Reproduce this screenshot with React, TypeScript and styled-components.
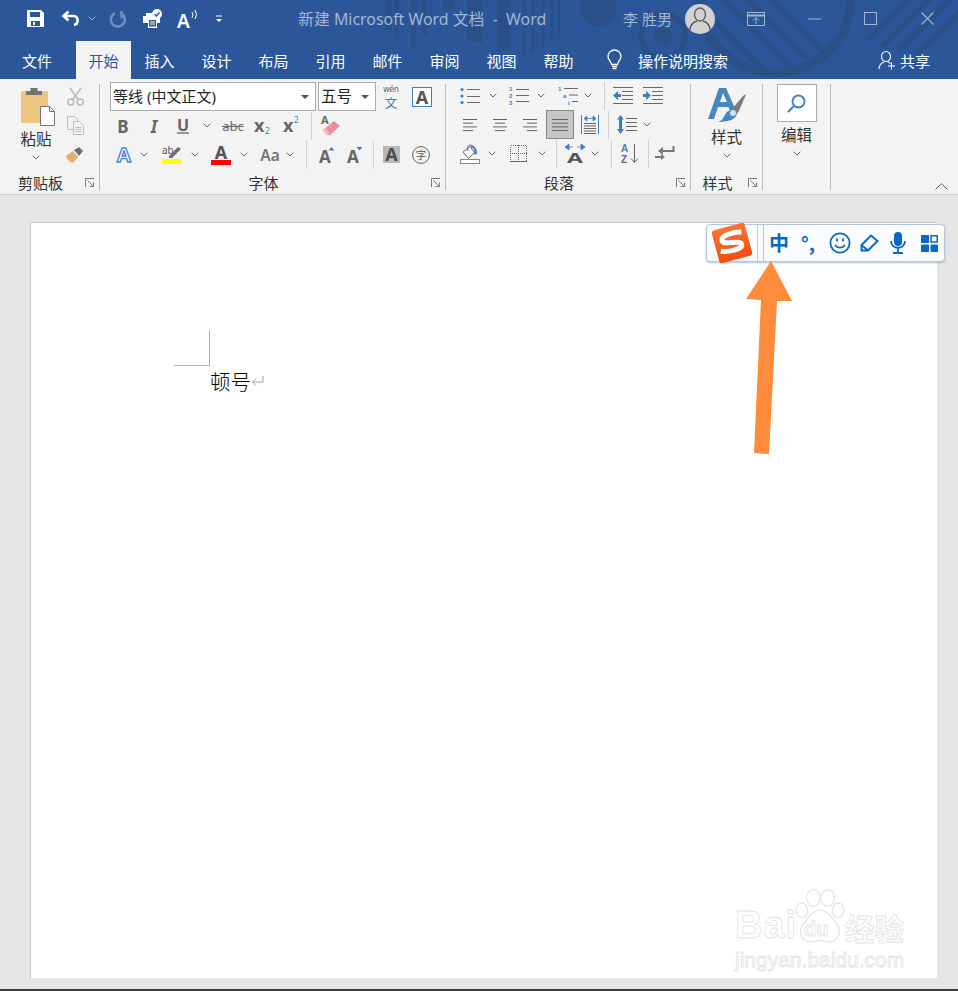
import React from "react";
import styled, { createGlobalStyle } from "styled-components";

const Global = createGlobalStyle`
  html, body { margin: 0; padding: 0; background: #e6e6e6; }
  body { font-family: "Noto Sans", "Noto Sans CJK SC", sans-serif; overflow: hidden; }
  svg { overflow: visible; display: block; }
`;

const Frame = styled.div`
  width: 958px;
  height: 991px;
  display: flex;
  flex-direction: column;
  position: relative;
  overflow: hidden;
`;

/* ---------- title bar and tabs ---------- */
const Chrome = styled.div`
  position: relative;
  height: 79px;
  background: #2b579a;
  flex: none;
`;
const Decor = styled.svg`
  position: absolute;
  left: 0;
  top: 0;
`;
const TitleBar = styled.div`
  position: relative;
  height: 41px;
  display: flex;
  align-items: center;
  padding-bottom: 4px;
  box-sizing: border-box;
`;
const Slot = styled.div<{ $w: number; $ml?: number }>`
  flex: none;
  width: ${(p) => p.$w}px;
  margin-left: ${(p) => p.$ml ?? 0}px;
  display: flex;
  align-items: center;
  justify-content: center;
`;
const Title = styled.div`
  flex: none;
  width: 250px;
  margin-left: 75px;
  font-size: 15.9px;
  line-height: 20px;
  color: #a3b6d4;
  white-space: pre;
`;
const UserName = styled.div`
  flex: none;
  width: 50px;
  margin-left: 75px;
  font-size: 15px;
  line-height: 20px;
  color: #a3b6d4;
  white-space: pre;
`;
const Avatar = styled.div`
  flex: none;
  width: 30px;
  height: 30px;
  margin-left: 12px;
  border-radius: 50%;
  background: #d2d2d2;
  display: flex;
  align-items: center;
  justify-content: center;
`;
const TabBar = styled.div`
  position: relative;
  height: 38px;
  display: flex;
  align-items: stretch;
`;
const Tab = styled.div<{ $w?: number; $ml?: number; $active?: boolean }>`
  flex: none;
  width: ${(p) => p.$w ?? 57}px;
  margin-left: ${(p) => p.$ml ?? 0}px;
  display: flex;
  align-items: center;
  justify-content: center;
  font-size: 15px;
  color: ${(p) => (p.$active ? "#2b579a" : "#ffffff")};
  background: ${(p) => (p.$active ? "#f3f3f3" : "transparent")};
`;
const TabText = styled.div<{ $w: number; $ml?: number }>`
  flex: none;
  width: ${(p) => p.$w}px;
  margin-left: ${(p) => p.$ml ?? 0}px;
  display: flex;
  align-items: center;
  font-size: 15px;
  color: #ffffff;
  white-space: pre;
`;

/* ---------- ribbon ---------- */
const Ribbon = styled.div`
  position: relative;
  flex: none;
  height: 116px;
  box-sizing: border-box;
  padding-top: 3px;
  background: #f3f3f3;
  border-bottom: 1px solid #d4d4d4;
  display: flex;
  align-items: flex-start;
`;
const Group = styled.div<{ $w: number }>`
  flex: none;
  width: ${(p) => p.$w}px;
  height: 112px;
  display: flex;
  flex-direction: column;
`;
const Body = styled.div<{ $pl?: number; $mt?: number }>`
  flex: 1;
  display: flex;
  flex-direction: column;
  padding-left: ${(p) => p.$pl ?? 0}px;
  margin-top: ${(p) => p.$mt ?? 0}px;
`;
const SplitBody = styled.div`
  flex: 1;
  display: flex;
`;
const Divider = styled.div`
  flex: none;
  width: 1px;
  height: 106px;
  margin-top: 2px;
  background: #b9b9b9;
`;
const Caption = styled.div`
  flex: none;
  height: 22px;
  display: flex;
  align-items: center;
`;
const CaptionText = styled.div`
  flex: 1;
  text-align: center;
  font-size: 15px;
  line-height: 20px;
  color: #333;
`;
const Launcher = styled.div`
  flex: none;
  width: 18px;
  display: flex;
  justify-content: center;
`;
const BigCol = styled.div<{ $w: number; $ml?: number; $pt?: number }>`
  flex: none;
  width: ${(p) => p.$w}px;
  margin-left: ${(p) => p.$ml ?? 0}px;
  padding-top: ${(p) => p.$pt ?? 6}px;
  display: flex;
  flex-direction: column;
  align-items: center;
`;
const PasteShift = styled.div`
  margin-left: 4px;
`;
const BigLabel = styled.div<{ $mt?: number }>`
  font-size: 15.5px;
  line-height: 20px;
  color: #333;
  margin-top: ${(p) => p.$mt ?? 3}px;
`;
const BigChevron = styled.div`
  margin-top: 6px;
`;
const Row = styled.div`
  height: 29px;
  display: flex;
  align-items: center;
`;
const ToolCol = styled.div<{ $ml: number }>`
  flex: none;
  margin-left: ${(p) => p.$ml}px;
  display: flex;
  flex-direction: column;
`;
const Sep = styled.div<{ $ml: number }>`
  flex: none;
  width: 1px;
  height: 28px;
  margin-left: ${(p) => p.$ml}px;
  background: #d0d0d0;
`;
const Select = styled.div<{ $w: number; $ml?: number; $size?: number }>`
  flex: none;
  box-sizing: border-box;
  width: ${(p) => p.$w}px;
  height: 29px;
  margin-left: ${(p) => p.$ml ?? 0}px;
  padding: 0 6px 2px 2px;
  background: #fff;
  border: 1px solid #ababab;
  display: flex;
  align-items: center;
  justify-content: space-between;
  font-size: ${(p) => p.$size ?? 15}px;
  color: #262626;
  white-space: pre;
`;
const Caret = styled.div`
  width: 0;
  height: 0;
  margin-top: 2px;
  border-left: 4px solid transparent;
  border-right: 4px solid transparent;
  border-top: 4px solid #555;
`;
const Pressed = styled.div<{ $ml: number }>`
  flex: none;
  box-sizing: border-box;
  width: 28px;
  height: 29px;
  margin-left: ${(p) => p.$ml}px;
  background: #c6c6c6;
  border: 1px solid #8a8a8a;
  display: flex;
  align-items: center;
  justify-content: center;
`;
const FindBox = styled.div`
  box-sizing: border-box;
  width: 40px;
  height: 38px;
  background: #fff;
  border: 1px solid #ababab;
  display: flex;
  align-items: center;
  justify-content: center;
`;
const Collapse = styled.div`
  position: absolute;
  right: 10px;
  bottom: 4px;
`;

/* ---------- document ---------- */
const DocArea = styled.div`
  flex: 1;
  background: #e6e6e6;
  padding: 27px 21px 11px 30px;
  display: flex;
  border-bottom: 2px solid #3c3c3c;
`;
const Page = styled.div`
  flex: 1;
  box-sizing: border-box;
  background: #fff;
  border-left: 1px solid #c6c6c6;
  border-top: 1px solid #c6c6c6;
  padding: 107px 0 0 143px;
`;
const CropMark = styled.div`
  box-sizing: border-box;
  width: 36px;
  height: 36px;
  border-right: 1px solid #b4b4b4;
  border-bottom: 1px solid #b4b4b4;
`;
const Line = styled.div`
  margin: 2px 0 0 36px;
  display: flex;
  align-items: center;
  font-family: "Noto Sans CJK SC", sans-serif;
  font-size: 20.5px;
  font-weight: 300;
  line-height: 26px;
  color: #000;
`;

/* ---------- overlays ---------- */
const ImeBar = styled.div`
  position: absolute;
  left: 706px;
  top: 224px;
  box-sizing: border-box;
  width: 239px;
  height: 38px;
  background: #fbfcfd;
  border: 1.5px solid #b4c6d6;
  border-radius: 4px;
  box-shadow: 0 1px 2px rgba(90, 120, 150, 0.45);
  display: flex;
  align-items: center;
`;
const ImeRule = styled.div`
  flex: none;
  width: 5px;
  height: 36px;
  margin-left: 4px;
  border-left: 1px solid #f7b999;
  border-right: 1px solid #f7b999;
`;
const ImeText = styled.div<{ $w: number; $ml?: number; $size: number }>`
  flex: none;
  width: ${(p) => p.$w}px;
  margin-left: ${(p) => p.$ml ?? 0}px;
  text-align: center;
  font-family: "Noto Sans CJK SC", sans-serif;
  font-weight: 700;
  font-size: ${(p) => p.$size}px;
  line-height: 36px;
  color: #0b68c0;
  white-space: pre;
`;
const ArrowSvg = styled.svg`
  position: absolute;
  left: 740px;
  top: 258px;
`;
const Watermark = styled.div`
  position: absolute;
  left: 735px;
  top: 888px;
  width: 176px;
  color: #fff;
  -webkit-text-stroke: 0.8px #e2e2e2;
`;
const MarkTop = styled.div`
  display: flex;
  align-items: flex-end;
  height: 58px;
`;
const MarkBai = styled.div`
  font-family: "Liberation Sans", sans-serif;
  font-weight: 700;
  font-size: 38px;
  line-height: 42px;
  letter-spacing: 1px;
  width: 60px;
`;
const MarkPaw = styled.div`
  position: relative;
  width: 50px;
  height: 58px;
`;
const MarkDu = styled.div`
  position: absolute;
  left: 9px;
  top: 29px;
  font-family: "Liberation Sans", sans-serif;
  font-weight: 700;
  font-size: 20px;
  line-height: 24px;
`;
const MarkCn = styled.div`
  font-family: "Noto Sans CJK SC", sans-serif;
  font-weight: 700;
  font-size: 29.5px;
  line-height: 38px;
  white-space: pre;
`;
const MarkUrl = styled.div`
  margin-top: 2px;
  font-family: "Liberation Sans", sans-serif;
  font-size: 21px;
  line-height: 24px;
  white-space: pre;
`;

/* ---------- icons ---------- */
const GREY = "#666666";
const BLUE = "#3f7fc1";
const SANS = "'Noto Sans', 'Liberation Sans', sans-serif";
const NARROW = "'Liberation Sans', sans-serif";

const Chevron = ({ color = "#6a6a6a" }: { color?: string }) => (
  <svg width="8" height="5" viewBox="0 0 8 5">
    <path d="M.7.7 4 4 7.3.7" fill="none" stroke={color} strokeWidth="1" />
  </svg>
);
const LauncherIcon = () => (
  <svg width="10" height="10" viewBox="0 0 10 10" fill="none" stroke="#7a7a7a" strokeWidth="1">
    <path d="M.5 9V.5H9" />
    <path d="M2.500 2.500 8.500 8.500M8.500 4.500v4h-4" />
  </svg>
);
const SaveIcon = () => (
  <svg width="17" height="17" viewBox="0 0 17 17">
    <path fillRule="evenodd" fill="#fff" d="M0 0h14l3 3v14H0zM3 2v5h10V2zM4 11v5h9v-5zM6 12h2v3H6z" />
  </svg>
);
const UndoIcon = () => (
  <svg width="19" height="17" viewBox="0 0 19 17" fill="none" stroke="#fff" strokeWidth="2.600">
    <path d="M7.500 1.500 2.500 6l5 4.500" />
    <path d="M3 6h9c6 0 6 8 1 9" />
  </svg>
);
const RedoIcon = () => (
  <svg width="18" height="18" viewBox="0 0 18 18" fill="none" stroke="#6f8dbb" strokeWidth="2.600">
    <path d="M6 3.200a7 7 0 1 0 6 .2" />
    <path d="M12.500 1v6h-1" />
  </svg>
);
const TouchIcon = () => (
  <svg width="20" height="20" viewBox="0 0 20 20">
    <path fill="#fff" d="M0 7h3V4h6v3h8v7h-3v5H5v-5H0z" />
    <path fill="#2b579a" d="M6 11h7v6.500H6z" />
    <path stroke="#fff" strokeWidth="1" d="M7 13h5M7 15h5" />
    <circle cx="14" cy="5" r="5" fill="#fff" />
    <path d="M11.500 5l2 2 3-3.500" fill="none" stroke="#2b579a" strokeWidth="1.500" />
  </svg>
);
const ReadIcon = () => (
  <svg width="22" height="20" viewBox="0 0 22 20">
    <text x="0" y="19" fontFamily={SANS} fontWeight="600" fontSize="19" fill="#fff">A</text>
    <path d="M15 3q2 3 0 6M18 1q3 4.500 0 9" fill="none" stroke="#fff" strokeWidth="1" />
  </svg>
);
const CustomizeIcon = () => (
  <svg width="8" height="8" viewBox="0 0 8 8">
    <path d="M1 1h6" stroke="#fff" strokeWidth="1" />
    <path d="M1 4h6L4 7z" fill="#fff" />
  </svg>
);
const UserGlyph = () => (
  <svg width="22" height="24" viewBox="0 0 22 24" fill="none" stroke="#5f5f5f" strokeWidth="1.400">
    <ellipse cx="11" cy="7.500" rx="5.500" ry="6.500" />
    <path d="M1 23c0-6 4-8 7-9M21 23c0-6-4-8-7-9" />
  </svg>
);
const RestoreIcon = () => (
  <svg width="18" height="14" viewBox="0 0 18 14" fill="none" stroke="#a3b6d4" strokeWidth="1">
    <rect x=".5" y=".5" width="17" height="13" />
    <path d="M.5 3.500h17" strokeWidth="2" />
    <path d="M9 12V6M6 8.500 9 5.500l3 3" />
  </svg>
);
const MinIcon = () => (
  <svg width="13" height="2" viewBox="0 0 13 2"><path d="M0 1h13" stroke="#a3b6d4" strokeWidth="1" /></svg>
);
const MaxIcon = () => (
  <svg width="13" height="13" viewBox="0 0 13 13"><rect x=".5" y=".5" width="12" height="12" fill="none" stroke="#a3b6d4" strokeWidth="1" /></svg>
);
const CloseIcon = () => (
  <svg width="13" height="13" viewBox="0 0 13 13"><path d="M.5.5l12 12M12.500.5l-12 12" stroke="#a3b6d4" strokeWidth="1.100" /></svg>
);
const BulbIcon = () => (
  <svg width="15" height="20" viewBox="0 0 15 20" fill="none" stroke="#fff" strokeWidth="1.300">
    <path d="M4.500 14.500C4 11 1 10 1 6.500a6.500 6.500 0 0 1 13 0c0 3.500-3 4.500-3.500 8z" />
    <path d="M5 16.500h5M5.500 18.500h4" />
  </svg>
);
const ShareIcon = () => (
  <svg width="18" height="19" viewBox="0 0 18 19" fill="none" stroke="#fff" strokeWidth="1.100">
    <ellipse cx="8" cy="5.500" rx="4.500" ry="5" />
    <path d="M1 18c0-4 2.500-6 5-7M10 11c1 .3 2 1 2.500 1.500" />
    <path d="M10 15h7M13.500 11.500V18.500" />
  </svg>
);
const PasteIcon = () => (
  <svg width="34" height="38" viewBox="0 0 34 38">
    <rect x="0" y="3" width="27" height="32" rx="1" fill="#edc67f" />
    <path d="M5 7V3h4.500V0h7v3H21v4z" fill="#727272" />
    <path d="M19.500 18.500h9l5 5v14h-14z" fill="#fff" stroke="#777" strokeWidth="1" />
    <path d="M28.500 18.500v5h5" fill="none" stroke="#777" strokeWidth="1" />
  </svg>
);
const CutIcon = () => (
  <svg width="17" height="19" viewBox="0 0 17 19" fill="none" stroke="#b8b8b8" strokeWidth="1.500">
    <path d="M3 1l8.500 12M14 1 5.500 13" />
    <circle cx="3.800" cy="15" r="3" />
    <circle cx="13.200" cy="15" r="3" />
  </svg>
);
const CopyIcon = () => (
  <svg width="17" height="19" viewBox="0 0 17 19" fill="#f3f3f3" stroke="#bdbdbd" strokeWidth="1">
    <path d="M.5.500h7l3 3v10H.5z" />
    <path d="M6.500 5.500h6l4 4v9h-10z" />
    <path d="M8.500 11.500h6M8.500 13.500h6M8.500 15.500h6" />
  </svg>
);
const BrushIcon = () => (
  <svg width="18" height="16" viewBox="0 0 18 16">
    <path d="M0 9l7-5 5 6-5 6C4 15 1 13 0 9z" fill="#e0b36c" />
    <path d="M8 3l5-3 4 4-4 5z" fill="#6f6f6f" />
  </svg>
);
const Glyph = ({ w, h, size, weight = 700, color = GREY, italic, children, y }: {
  w: number; h: number; size: number; weight?: number; color?: string; italic?: boolean; children: string; y?: number;
}) => (
  <svg width={w} height={h} viewBox={`0 0 ${w} ${h}`}>
    <text x={w / 2} y={y ?? h - 1} textAnchor="middle" fontFamily={SANS} fontWeight={weight}
      fontStyle={italic ? "italic" : "normal"} fontSize={size} fill={color}>{children}</text>
  </svg>
);
const WenIcon = () => (
  <svg width="18" height="20" viewBox="0 0 18 20">
    <text x="9" y="4.500" textAnchor="middle" fontFamily={NARROW} fontSize="8.500" fill="#555">wén</text>
    <text x="9" y="20.500" textAnchor="middle" fontFamily="'Noto Sans CJK SC', sans-serif" fontSize="12.500" fill={BLUE}>文</text>
  </svg>
);
const BoxedA = () => (
  <svg width="20" height="20" viewBox="0 0 20 20">
    <rect x=".5" y=".5" width="19" height="19" fill="#fff" stroke={BLUE} />
    <text x="10" y="16.500" textAnchor="middle" fontFamily={SANS} fontWeight="700" fontSize="18" fill="#555">A</text>
  </svg>
);
const UnderlineIcon = () => (
  <svg width="14" height="17" viewBox="0 0 14 17">
    <text x="7" y="13.500" textAnchor="middle" fontFamily={SANS} fontWeight="700" fontSize="16" fill={GREY}>U</text>
    <path d="M1 16h12" stroke={GREY} strokeWidth="1.300" />
  </svg>
);
const StrikeIcon = () => (
  <svg width="22" height="14" viewBox="0 0 22 14">
    <text x="11" y="11.500" textAnchor="middle" fontFamily={SANS} fontSize="13" fill="#6a6a6a">abc</text>
    <path d="M0 7.500h22" stroke="#6a6a6a" strokeWidth="1" />
  </svg>
);
const ScriptIcon = ({ sup }: { sup?: boolean }) => (
  <svg width="16" height="16" viewBox="0 0 16 16">
    <text x="-1" y="14" fontFamily={SANS} fontWeight="700" fontSize="18" fill={GREY}>x</text>
    <text x="10" y={sup ? 5 : 15.5} fontFamily={SANS} fontSize="8" fill={BLUE}>2</text>
  </svg>
);
const EraserIcon = () => (
  <svg width="20" height="21" viewBox="0 0 20 21">
    <text x="0" y="9" fontFamily={SANS} fontWeight="700" fontSize="11" fill={GREY}>A</text>
    <path d="M2 15 13 6l6 5-10 9H6z" fill="#ee8e9a" />
    <path d="M2 15l2.500-2 4 5-1.500 2H6z" fill="#f4b6bf" />
  </svg>
);
const EffectsIcon = () => (
  <svg width="18" height="19" viewBox="0 0 18 19">
    <text x="9" y="16.500" textAnchor="middle" fontFamily={SANS} fontWeight="700" fontSize="20"
      fill="#fff" stroke="#4d8ad0" strokeWidth="1.400">A</text>
  </svg>
);
const HighlightIcon = () => (
  <svg width="20" height="19" viewBox="0 0 20 19">
    <text x="0" y="9" fontFamily={SANS} fontSize="10" fill="#555">ab</text>
    <path d="M7 11 16 2l3 2-9 9H7z" fill="#6f6f6f" />
    <rect x="0" y="14" width="20" height="5" fill="#ffff00" />
  </svg>
);
const FontColorIcon = () => (
  <svg width="20" height="20" viewBox="0 0 20 20">
    <text x="10" y="13.500" textAnchor="middle" fontFamily={SANS} fontWeight="700" fontSize="18" fill="#555">A</text>
    <rect x="0" y="15" width="20" height="5" fill="#ff0000" />
  </svg>
);
const SizeIcon = ({ up }: { up?: boolean }) => (
  <svg width="16" height="16" viewBox="0 0 16 16">
    <text x="6" y="15.500" textAnchor="middle" fontFamily={SANS} fontWeight="700" fontSize="17" fill={GREY}>A</text>
    <path d={up ? "M9.500 3.500 12.500 0l3 3.500z" : "M9.500 0l3 3.500 3-3.500z"} fill={BLUE} />
  </svg>
);
const ShadedA = () => (
  <svg width="17" height="17" viewBox="0 0 17 17">
    <rect width="17" height="17" fill="#b8b8b8" />
    <text x="8.500" y="15" textAnchor="middle" fontFamily={SANS} fontWeight="700" fontSize="18" fill="#4d4d4d">A</text>
  </svg>
);
const CircleChar = () => (
  <svg width="18" height="18" viewBox="0 0 18 18">
    <circle cx="9" cy="9" r="8.400" fill="none" stroke="#666" strokeWidth="1" />
    <text x="9" y="13" textAnchor="middle" fontFamily="'Noto Sans CJK SC', sans-serif" fontSize="10.500" fill="#555">字</text>
  </svg>
);
const ListLines = ({ x = 7, w = 13, ys }: { x?: number; w?: number; ys: number[] }) => (
  <>{ys.map((y) => <path key={y} d={`M${x} ${y}h${w}`} stroke="#6a6a6a" strokeWidth="1" />)}</>
);
const BulletsIcon = () => (
  <svg width="20" height="18" viewBox="0 0 20 18">
    <circle cx="2" cy="2.500" r="1.600" fill={BLUE} />
    <circle cx="2" cy="9" r="1.600" fill={BLUE} />
    <circle cx="2" cy="15.500" r="1.600" fill={BLUE} />
    <ListLines ys={[2.5, 9.5, 15.5]} />
  </svg>
);
const NumberedIcon = () => (
  <svg width="20" height="19" viewBox="0 0 20 19">
    {["1", "2", "3"].map((n, i) => (
      <text key={n} x="0" y={5 + i * 7} fontFamily={NARROW} fontWeight="700" fontSize="6" fill={BLUE}>{n}</text>
    ))}
    <ListLines ys={[3.5, 9.5, 15.5]} />
  </svg>
);
const MultiIcon = () => (
  <svg width="20" height="19" viewBox="0 0 20 19">
    <text x="0" y="5" fontFamily={NARROW} fontWeight="700" fontSize="6" fill={BLUE}>1</text>
    <text x="5" y="12" fontFamily={NARROW} fontWeight="700" fontSize="6" fill={BLUE}>a</text>
    <text x="10" y="19" fontFamily={NARROW} fontWeight="700" fontSize="6" fill={BLUE}>i</text>
    <path d="M6 2.500h14M11 9h9M14 15.500h6" stroke="#6a6a6a" strokeWidth="1" />
  </svg>
);
const IndentIcon = ({ right }: { right?: boolean }) => (
  <svg width="20" height="17" viewBox="0 0 20 17">
    <path d="M0 .5h20M9 4.500h11M9 8.500h11M9 12.500h11M0 16.500h20" stroke="#6a6a6a" strokeWidth="1" />
    <path d={right ? "M8 8.500 3 4v3H0v3h3v3z" : "M0 8.500 5 4v3h3v3H5v3z"} fill={BLUE} />
  </svg>
);
const AlignIcon = ({ kind }: { kind: "l" | "c" | "r" | "j" }) => {
  const rows = [14, 10, 14, 10].map((w) => (kind === "j" ? 16 : w));
  const left = (w: number) => (kind === "l" ? 0 : kind === "r" ? 14 - w : (14 - w) / 2);
  const width = kind === "j" ? 16 : 14;
  return (
    <svg width={width} height="12" viewBox={`0 0 ${width} 12`}>
      {rows.map((w, i) => (
        <path key={i} d={`M${kind === "j" ? 0 : left(w)} ${i * 3.7 + 0.5}h${w}`} stroke="#666" strokeWidth="1" />
      ))}
    </svg>
  );
};
const DistributeIcon = () => (
  <svg width="18" height="19" viewBox="0 0 18 19">
    <path d="M.5 0v19M17.500 0v19" stroke={BLUE} strokeWidth="1" />
    <path d="M3 3.500h12M3 3.500 6 1v5zM15 3.500 12 1v5z" stroke={BLUE} fill={BLUE} strokeWidth=".8" />
    <path d="M3 8.500h12M3 11h12M3 13.500h12M3 16h12M3 18.500h12" stroke="#666" strokeWidth="1" />
  </svg>
);
const SpacingIcon = () => (
  <svg width="20" height="19" viewBox="0 0 20 19">
    <path d="M3.500 0 7 4.500H5V14h2l-3.500 5L0 14h2V4.500H0z" fill={BLUE} />
    <path d="M9 3.500h11M9 7.500h11M9 11.500h11M9 15.500h11" stroke="#666" strokeWidth="1" />
  </svg>
);
const ShadingIcon = () => (
  <svg width="20" height="20" viewBox="0 0 20 20">
    <path d="M10 2.500 3 8l5.500 6.500 6-6z" fill="#f8f8f8" stroke="#666" strokeWidth="1" />
    <path d="M8 7c-1-3 0-6 2-6s2 2 1.500 4" fill="none" stroke="#666" strokeWidth="1" />
    <path d="M10 1c4 0 7 3 7 8 0 2-3 2-3 0 0-1 .5-2 .5-3z" fill={BLUE} />
    <rect x=".5" y="15.500" width="19" height="4" fill="#fff" stroke="#888" />
  </svg>
);
const BordersIcon = () => (
  <svg width="17" height="17" viewBox="0 0 17 17" fill="none" stroke="#666" strokeWidth="1" strokeDasharray="1 1" shapeRendering="crispEdges">
    <rect x=".5" y=".5" width="16" height="16" />
    <path d="M8.500 0v17M0 8.500h17" />
    <path d="M0 16.500h17" strokeDasharray="none" />
  </svg>
);
const AsianIcon = () => (
  <svg width="20" height="19" viewBox="0 0 20 19">
    <path d="M0 3h8M0 3 4 0v6zM20 3h-8M20 3l-4-3v6z" stroke={BLUE} fill={BLUE} strokeWidth=".8" />
    <text transform="translate(10 19) scale(1.35 .85)" textAnchor="middle" fontFamily={SANS} fontWeight="700" fontSize="17" fill="#555">A</text>
  </svg>
);
const SortIcon = () => (
  <svg width="18" height="21" viewBox="0 0 18 21">
    <text x="0" y="8.500" fontFamily={NARROW} fontWeight="700" fontSize="10" fill={BLUE}>A</text>
    <text x="0" y="20" fontFamily={NARROW} fontWeight="700" fontSize="10" fill="#8a4fb0">Z</text>
    <path d="M13.500 1v18M10 15.500l3.500 4 3.500-4" fill="none" stroke="#666" strokeWidth="1" />
  </svg>
);
const MarksIcon = () => (
  <svg width="20" height="17" viewBox="0 0 20 17">
    <path d="M18.500 1v5H8" fill="none" stroke="#777" strokeWidth="2" />
    <path d="M8 2v8L3 6z" fill="#777" />
    <path d="M0 12h6" stroke="#777" strokeWidth="2" />
    <path d="M6 9v6l4-3z" fill="#777" />
  </svg>
);
const StylesIcon = () => (
  <svg width="38" height="36" viewBox="0 0 38 36">
    <path d="M0 31 11 0h7l11 25h-6l-2.500-6H10L6 31zM12 14h7L15 5z" fill="#4a86c0" fillRule="evenodd" />
    <path d="M24 21 35 8l3-2-1 3-7 16z" fill="#7d7d7d" />
    <path d="M23 22c3-2 6 0 6 3 0 5-6 9-19 9 5-2 5-4 7-7 1-3 3-4 6-5z" fill="#4a86c0" />
    <circle cx="25" cy="25" r="3" fill="#cfe0f0" />
  </svg>
);
const FindIcon = () => (
  <svg width="19" height="19" viewBox="0 0 19 19" fill="none" stroke={BLUE} strokeWidth="1.800">
    <circle cx="11.500" cy="7.500" r="6" />
    <path d="M7 12 1 18" strokeWidth="2.200" />
  </svg>
);
const ReturnMark = () => (
  <svg width="13" height="11" viewBox="0 0 13 11" fill="none" stroke="#a0a0a0" strokeWidth="1">
    <path d="M12 0v6H1.500M5 2.500 1.500 6 5 9.500" />
  </svg>
);
const SogouLogo = () => (
  <svg width="42" height="40" viewBox="0 0 42 40">
    <defs>
      <linearGradient id="sogou" x1="0" y1="0" x2="0" y2="1">
        <stop offset="0" stopColor="#fa7338" />
        <stop offset="1" stopColor="#f24e0f" />
      </linearGradient>
    </defs>
    <g transform="rotate(-15 21 20)">
      <rect x="4" y="3" width="34" height="34" rx="3" fill="url(#sogou)" />
      <path d="M33 12c-6-2-21-3-21 3 0 6 18 3 18 9 0 5-16 4-22 1" fill="none" stroke="#fff" strokeWidth="5" />
    </g>
  </svg>
);
const SmileIcon = () => (
  <svg width="22" height="22" viewBox="0 0 22 22" fill="none" stroke="#0b68c0" strokeWidth="1.800">
    <circle cx="11" cy="11" r="9.600" />
    <path d="M6 13c2.500 3.500 7.500 3.500 10 0" />
    <path d="M8 6.500v3M14 6.500v3" />
  </svg>
);
const PencilIcon = () => (
  <svg width="19" height="18" viewBox="0 0 19 18" fill="none" stroke="#0b68c0" strokeWidth="2">
    <path d="M1.500 11 11 1.500 17.500 7 8 16.500H1.500z" />
    <path d="M1.500 11 8 16.500" />
  </svg>
);
const MicIcon = () => (
  <svg width="16" height="22" viewBox="0 0 16 22">
    <rect x="4" y="0" width="8" height="14" rx="4" fill="#0b68c0" />
    <path d="M1 9c0 9 14 9 14 0M8 16v4M3 21h10" fill="none" stroke="#0b68c0" strokeWidth="1.800" />
  </svg>
);
const TilesIcon = () => (
  <svg width="17" height="17" viewBox="0 0 17 17">
    <rect x="0" y="0" width="8" height="8" rx="1" fill="#0b68c0" />
    <rect x="10" y=".8" width="6.200" height="6.200" fill="#fff" stroke="#0b68c0" strokeWidth="1.500" />
    <rect x="0" y="9.500" width="8" height="7.500" rx="1" fill="#0b68c0" />
    <rect x="9.500" y="9.500" width="7.500" height="7.500" rx="1" fill="#0b68c0" />
  </svg>
);
const Paw = () => (
  <svg width="50" height="58" viewBox="0 0 52 58" fill="#fff" stroke="#e2e2e2" strokeWidth="1.200">
    <ellipse cx="19" cy="9" rx="7" ry="8.500" />
    <ellipse cx="34" cy="9" rx="7" ry="8.500" />
    <ellipse cx="7" cy="22" rx="6" ry="7.500" />
    <ellipse cx="45" cy="22" rx="6" ry="7.500" />
    <path d="M26 22c9 0 13 10 18 15 5 8 0 18-9 18-4 0-6-2-9-2s-6 2-10 2C7 55 3 45 8 37c5-5 9-15 18-15z" />
  </svg>
);

const tabs = ["插入", "设计", "布局", "引用", "邮件", "审阅", "视图", "帮助"];

export default function App() {
  return (
    <Frame>
      <Global />
      <Chrome>
        <Decor width="958" height="79" viewBox="0 0 958 79">
          <defs>
            <clipPath id="ring"><circle cx="775" cy="-3" r="73" /></clipPath>
            <clipPath id="band"><rect width="958" height="79" /></clipPath>
          </defs>
          <g clipPath="url(#band)">
            <g fill="#2a5088">
              <rect x="386" y="0" width="6" height="30" />
              <rect x="394" y="0" width="5" height="39" />
              <rect x="411" y="0" width="5" height="49" />
              <rect x="422" y="0" width="5" height="35" />
              <path d="M443 0h12v6q-1 5-6 5t-6-5z" />
              <path d="M467 0h16v43l-16-3z" />
              <path d="M497 0h13v51h-13z" />
              <rect x="522" y="0" width="4" height="55" />
              <rect x="531" y="0" width="4" height="52" />
              <rect x="541" y="0" width="3" height="47" />
              <rect x="550" y="0" width="3" height="42" />
              <rect x="558" y="0" width="2" height="36" />
              <circle cx="598" cy="8" r="18" />
              <circle cx="663" cy="36" r="9" />
            </g>
            <circle cx="663" cy="36" r="22" fill="none" stroke="#2a5088" strokeWidth="6" />
            <circle cx="775" cy="-3" r="76" fill="none" stroke="#2a5088" strokeWidth="9" />
            <g clipPath="url(#ring)" stroke="#2a5088" strokeWidth="6">
              <path d="M700 6 770 76M716 -8l75 75M732 -16l75 75M748 -24l75 75" />
            </g>
            <path d="M868 40 908 0M882 47 930 -1M898 52 952 -2M918 54 960 12" stroke="#2a5088" strokeWidth="6" />
          </g>
        </Decor>
        <TitleBar>
          <Slot $w={20} $ml={25}><SaveIcon /></Slot>
          <Slot $w={20} $ml={15}><UndoIcon /></Slot>
          <Slot $w={8} $ml={8}><Chevron color="#a3b6d4" /></Slot>
          <Slot $w={20} $ml={12}><RedoIcon /></Slot>
          <Slot $w={20} $ml={15}><TouchIcon /></Slot>
          <Slot $w={22} $ml={14}><ReadIcon /></Slot>
          <Slot $w={8} $ml={16}><CustomizeIcon /></Slot>
          <Title>新建 Microsoft Word 文档  -  Word</Title>
          <UserName>李 胜男</UserName>
          <Avatar><UserGlyph /></Avatar>
          <Slot $w={20} $ml={31}><RestoreIcon /></Slot>
          <Slot $w={20} $ml={38}><MinIcon /></Slot>
          <Slot $w={20} $ml={36}><MaxIcon /></Slot>
          <Slot $w={20} $ml={37}><CloseIcon /></Slot>
        </TitleBar>
        <TabBar>
          <Tab $w={58} $ml={8}>文件</Tab>
          <Tab $w={55} $ml={10} $active>开始</Tab>
          {tabs.map((t) => <Tab key={t}>{t}</Tab>)}
          <Slot $w={16} $ml={19}><BulbIcon /></Slot>
          <TabText $w={92} $ml={16}>操作说明搜索</TabText>
          <Slot $w={18} $ml={148}><ShareIcon /></Slot>
          <TabText $w={34} $ml={4}>共享</TabText>
        </TabBar>
      </Chrome>

      <Ribbon>
        <Group $w={99}>
          <SplitBody>
            <BigCol $w={40} $ml={16}>
              <PasteShift><PasteIcon /></PasteShift>
              <BigLabel>粘贴</BigLabel>
              <BigChevron><Chevron /></BigChevron>
            </BigCol>
            <ToolCol $ml={6}>
              <Row><Slot $w={26}><CutIcon /></Slot></Row>
              <Row><Slot $w={26}><CopyIcon /></Slot></Row>
              <Row><Slot $w={26}><BrushIcon /></Slot></Row>
            </ToolCol>
          </SplitBody>
          <Caption>
            <CaptionText>剪贴板</CaptionText>
            <Launcher><LauncherIcon /></Launcher>
          </Caption>
        </Group>
        <Divider />

        <Group $w={345}>
          <Body $pl={10}>
            <Row>
              <Select $w={206}>等线 (中文正文)<Caret /></Select>
              <Select $w={58} $ml={2} $size={15.5}>五号<Caret /></Select>
              <Slot $w={30}><WenIcon /></Slot>
              <Slot $w={32}><BoxedA /></Slot>
            </Row>
            <Row>
              <Slot $w={26}><Glyph w={14} h={16} size={17} y={15}>B</Glyph></Slot>
              <Slot $w={36}><Glyph w={14} h={16} size={17} y={15} italic>I</Glyph></Slot>
              <Slot $w={22}><UnderlineIcon /></Slot>
              <Slot $w={26}><Chevron /></Slot>
              <Slot $w={26}><StrikeIcon /></Slot>
              <Slot $w={34}><ScriptIcon /></Slot>
              <Slot $w={24}><ScriptIcon sup /></Slot>
              <Sep $ml={7} />
              <Slot $w={26} $ml={6}><EraserIcon /></Slot>
            </Row>
            <Row>
              <Slot $w={28}><EffectsIcon /></Slot>
              <Slot $w={12}><Chevron /></Slot>
              <Slot $w={24} $ml={10}><HighlightIcon /></Slot>
              <Slot $w={12} $ml={5}><Chevron /></Slot>
              <Slot $w={24} $ml={8}><FontColorIcon /></Slot>
              <Slot $w={12} $ml={5}><Chevron /></Slot>
              <Slot $w={24} $ml={8}><Glyph w={20} h={16} size={15.5} color="#777" weight={600} y={14}>Aa</Glyph></Slot>
              <Slot $w={12} $ml={2}><Chevron /></Slot>
              <Sep $ml={10} />
              <Slot $w={24} $ml={8}><SizeIcon up /></Slot>
              <Slot $w={24} $ml={4}><SizeIcon /></Slot>
              <Sep $ml={6} />
              <Slot $w={24} $ml={5}><ShadedA /></Slot>
              <Slot $w={24} $ml={6}><CircleChar /></Slot>
            </Row>
          </Body>
          <Caption>
            <CaptionText>字体</CaptionText>
            <Launcher><LauncherIcon /></Launcher>
          </Caption>
        </Group>
        <Divider />

        <Group $w={244}>
          <Body $pl={14} $mt={-1}>
            <Row>
              <Slot $w={20}><BulletsIcon /></Slot>
              <Slot $w={12} $ml={7}><Chevron /></Slot>
              <Slot $w={20} $ml={10}><NumberedIcon /></Slot>
              <Slot $w={12} $ml={6}><Chevron /></Slot>
              <Slot $w={20} $ml={11}><MultiIcon /></Slot>
              <Slot $w={12} $ml={4}><Chevron /></Slot>
              <Sep $ml={10} />
              <Slot $w={20} $ml={8}><IndentIcon /></Slot>
              <Slot $w={20} $ml={10}><IndentIcon right /></Slot>
            </Row>
            <Row>
              <Slot $w={20}><AlignIcon kind="l" /></Slot>
              <Slot $w={20} $ml={10}><AlignIcon kind="c" /></Slot>
              <Slot $w={20} $ml={10}><AlignIcon kind="r" /></Slot>
              <Pressed $ml={6}><AlignIcon kind="j" /></Pressed>
              <Slot $w={20} $ml={6}><DistributeIcon /></Slot>
              <Sep $ml={8} />
              <Slot $w={20} $ml={8}><SpacingIcon /></Slot>
              <Slot $w={12} $ml={4}><Chevron /></Slot>
            </Row>
            <Row>
              <Slot $w={20}><ShadingIcon /></Slot>
              <Slot $w={12} $ml={6}><Chevron /></Slot>
              <Slot $w={20} $ml={10}><BordersIcon /></Slot>
              <Slot $w={12} $ml={8}><Chevron /></Slot>
              <Sep $ml={8} />
              <Slot $w={22} $ml={7}><AsianIcon /></Slot>
              <Slot $w={12} $ml={3}><Chevron /></Slot>
              <Sep $ml={10} />
              <Slot $w={20} $ml={8}><SortIcon /></Slot>
              <Sep $ml={8} />
              <Slot $w={20} $ml={6}><MarksIcon /></Slot>
            </Row>
          </Body>
          <Caption>
            <CaptionText>段落</CaptionText>
            <Launcher><LauncherIcon /></Launcher>
          </Caption>
        </Group>
        <Divider />

        <Group $w={71}>
          <SplitBody>
            <BigCol $w={71}>
              <StylesIcon />
              <BigLabel>样式</BigLabel>
              <BigChevron><Chevron /></BigChevron>
            </BigCol>
          </SplitBody>
          <Caption>
            <CaptionText>样式</CaptionText>
            <Launcher><LauncherIcon /></Launcher>
          </Caption>
        </Group>
        <Divider />

        <Group $w={67}>
          <SplitBody>
            <BigCol $w={67} $pt={2}>
              <FindBox><FindIcon /></FindBox>
              <BigLabel>编辑</BigLabel>
              <BigChevron><Chevron /></BigChevron>
            </BigCol>
          </SplitBody>
        </Group>
        <Divider />
        <Collapse>
          <svg width="13" height="7" viewBox="0 0 13 7">
            <path d="M.5 6.500 6.500.7l6 5.800" fill="none" stroke="#555" strokeWidth="1" />
          </svg>
        </Collapse>
      </Ribbon>

      <DocArea>
        <Page>
          <CropMark />
          <Line>顿号<ReturnMark /></Line>
        </Page>
      </DocArea>

      <ImeBar>
        <Slot $w={42} $ml={4}><SogouLogo /></Slot>
        <ImeRule />
        <ImeText $w={24} $ml={3} $size={20}>中</ImeText>
        <ImeText $w={22} $ml={6} $size={19}>°,</ImeText>
        <Slot $w={24} $ml={9}><SmileIcon /></Slot>
        <Slot $w={24} $ml={5}><PencilIcon /></Slot>
        <Slot $w={24} $ml={5}><MicIcon /></Slot>
        <Slot $w={24} $ml={7}><TilesIcon /></Slot>
      </ImeBar>
      <ArrowSvg width="56" height="200" viewBox="0 0 56 200">
        <path d="M31 3 52 43 37 43 29 196 14 195 21 42 6 41z" fill="#ff8c3c" />
      </ArrowSvg>
      <Watermark>
        <MarkTop>
          <MarkBai>Bai</MarkBai>
          <MarkPaw>
            <Paw />
            <MarkDu>du</MarkDu>
          </MarkPaw>
          <MarkCn>经验</MarkCn>
        </MarkTop>
        <MarkUrl>jingyan.baidu.com</MarkUrl>
      </Watermark>
    </Frame>
  );
}
